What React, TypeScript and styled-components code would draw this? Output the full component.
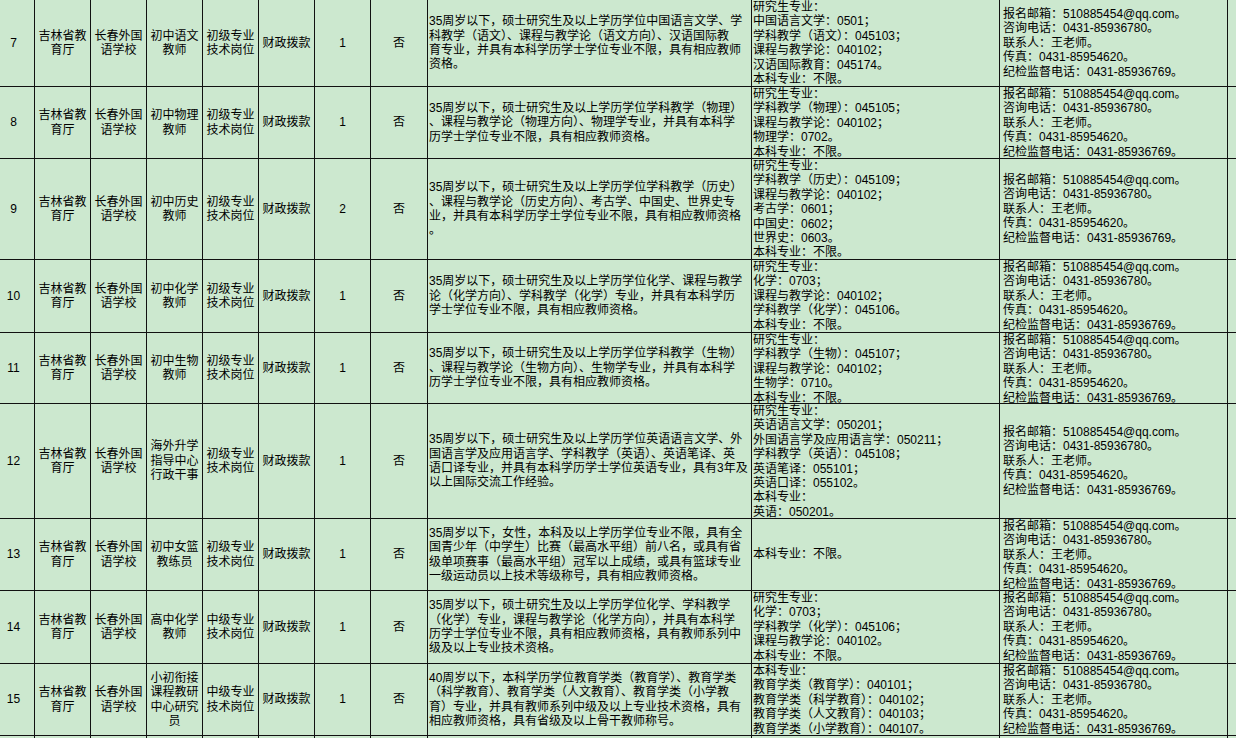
import React from 'react';
import styled, { createGlobalStyle } from 'styled-components';

const Global = createGlobalStyle`
  html, body { margin: 0; padding: 0; background: #cce8cf; overflow: hidden; }
  body {
    font-family: "Liberation Sans", "Noto Sans CJK SC", sans-serif;
    font-size: 12px;
    color: #000;
  }
`;

const COLS = '35px 56px 56px 56px 56px 56px 56px 57px 324px 248px 228px 1fr';

const Sheet = styled.div`
  display: flex;
  flex-direction: column;
  width: 1236px;
  height: 738px;
  overflow: hidden;
  background: #cce8cf;
`;

const Row = styled.div<{ $h: number }>`
  display: grid;
  grid-template-columns: ${COLS};
  flex: 0 0 auto;
  height: ${(p) => p.$h}px;
  box-sizing: border-box;
  border-bottom: 1px solid #111;
`;

const Cell = styled.div<{ $last?: boolean }>`
  box-sizing: border-box;
  min-width: 0;
  overflow: hidden;
  display: flex;
  flex-direction: column;
  border-right: ${(p) => (p.$last ? 'none' : '1px solid #111')};
`;

const NumCell = styled(Cell)`
  text-align: center;
  padding-right: 7px;
`;

const MidCell = styled(Cell)`
  text-align: center;
`;

const TextCell = styled(Cell)`
  text-align: left;
  padding-left: 1px;
`;

const ContactCell = styled(Cell)`
  text-align: left;
  padding-left: 3px;
`;

const Lines = styled.div`
  margin: auto 0;
  line-height: 14.4px;
  white-space: nowrap;
`;

const Line = styled.div`
  height: 14.4px;
`;

type RowData = {
  no: string;
  h: number;
  job: string[];
  level: string[];
  count: string;
  desc: string[];
  major: string[];
};

const CONTACT = [
  '报名邮箱：510885454@qq.com。',
  '咨询电话：0431-85936780。',
  '联系人：王老师。',
  '传真：0431-85954620。',
  '纪检监督电话：0431-85936769。',
];

const JUNIOR = ['初级专业', '技术岗位'];
const MIDDLE = ['中级专业', '技术岗位'];

const ROWS: RowData[] = [
  {
    no: '7', h: 87, job: ['初中语文', '教师'], level: JUNIOR, count: '1',
    desc: [
      '35周岁以下，硕士研究生及以上学历学位中国语言文学、学',
      '科教学（语文）、课程与教学论（语文方向）、汉语国际教',
      '育专业，并具有本科学历学士学位专业不限，具有相应教师',
      '资格。',
    ],
    major: [
      '研究生专业：',
      '中国语言文学：0501；',
      '学科教学（语文）：045103；',
      '课程与教学论：040102；',
      '汉语国际教育：045174。',
      '本科专业：不限。',
    ],
  },
  {
    no: '8', h: 72, job: ['初中物理', '教师'], level: JUNIOR, count: '1',
    desc: [
      '35周岁以下，硕士研究生及以上学历学位学科教学（物理）',
      '、课程与教学论（物理方向）、物理学专业，并具有本科学',
      '历学士学位专业不限，具有相应教师资格。',
    ],
    major: [
      '研究生专业：',
      '学科教学（物理）：045105；',
      '课程与教学论：040102；',
      '物理学：0702。',
      '本科专业：不限。',
    ],
  },
  {
    no: '9', h: 101, job: ['初中历史', '教师'], level: JUNIOR, count: '2',
    desc: [
      '35周岁以下，硕士研究生及以上学历学位学科教学（历史）',
      '、课程与教学论（历史方向）、考古学、中国史、世界史专',
      '业，并具有本科学历学士学位专业不限，具有相应教师资格',
      '。',
    ],
    major: [
      '研究生专业：',
      '学科教学（历史）：045109；',
      '课程与教学论：040102；',
      '考古学：0601；',
      '中国史：0602；',
      '世界史：0603。',
      '本科专业：不限。',
    ],
  },
  {
    no: '10', h: 73, job: ['初中化学', '教师'], level: JUNIOR, count: '1',
    desc: [
      '35周岁以下，硕士研究生及以上学历学位化学、课程与教学',
      '论（化学方向）、学科教学（化学）专业，并具有本科学历',
      '学士学位专业不限，具有相应教师资格。',
    ],
    major: [
      '研究生专业：',
      '化学：0703；',
      '课程与教学论：040102；',
      '学科教学（化学）：045106。',
      '本科专业：不限。',
    ],
  },
  {
    no: '11', h: 71, job: ['初中生物', '教师'], level: JUNIOR, count: '1',
    desc: [
      '35周岁以下，硕士研究生及以上学历学位学科教学（生物）',
      '、课程与教学论（生物方向）、生物学专业，并具有本科学',
      '历学士学位专业不限，具有相应教师资格。',
    ],
    major: [
      '研究生专业：',
      '学科教学（生物）：045107；',
      '课程与教学论：040102；',
      '生物学：0710。',
      '本科专业：不限。',
    ],
  },
  {
    no: '12', h: 115, job: ['海外升学', '指导中心', '行政干事'], level: JUNIOR, count: '1',
    desc: [
      '35周岁以下，硕士研究生及以上学历学位英语语言文学、外',
      '国语言学及应用语言学、学科教学（英语）、英语笔译、英',
      '语口译专业，并具有本科学历学士学位英语专业，具有3年及',
      '以上国际交流工作经验。',
    ],
    major: [
      '研究生专业：',
      '英语语言文学：050201；',
      '外国语言学及应用语言学：050211；',
      '学科教学（英语）：045108；',
      '英语笔译：055101；',
      '英语口译：055102。',
      '本科专业：',
      '英语：050201。',
    ],
  },
  {
    no: '13', h: 72, job: ['初中女篮', '教练员'], level: JUNIOR, count: '1',
    desc: [
      '35周岁以下，女性，本科及以上学历学位专业不限，具有全',
      '国青少年（中学生）比赛（最高水平组）前八名，或具有省',
      '级单项赛事（最高水平组）冠军以上成绩，或具有篮球专业',
      '一级运动员以上技术等级称号，具有相应教师资格。',
    ],
    major: ['本科专业：不限。'],
  },
  {
    no: '14', h: 73, job: ['高中化学', '教师'], level: MIDDLE, count: '1',
    desc: [
      '35周岁以下，硕士研究生及以上学历学位化学、学科教学',
      '（化学）专业，课程与教学论（化学方向），并具有本科学',
      '历学士学位专业不限，具有相应教师资格，具有教师系列中',
      '级及以上专业技术资格。',
    ],
    major: [
      '研究生专业：',
      '化学：0703；',
      '学科教学（化学）：045106；',
      '课程与教学论：040102。',
      '本科专业：不限。',
    ],
  },
  {
    no: '15', h: 72, job: ['小初衔接', '课程教研', '中心研究', '员'], level: MIDDLE, count: '1',
    desc: [
      '40周岁以下，本科学历学位教育学类（教育学）、教育学类',
      '（科学教育）、教育学类（人文教育）、教育学类（小学教',
      '育）专业，并具有教师系列中级及以上专业技术资格，具有',
      '相应教师资格，具有省级及以上骨干教师称号。',
    ],
    major: [
      '本科专业：',
      '教育学类（教育学）：040101；',
      '教育学类（科学教育）：040102；',
      '教育学类（人文教育）：040103；',
      '教育学类（小学教育）：040107。',
    ],
  },
];

const Text: React.FC<{ lines: string[] }> = ({ lines }) => (
  <Lines>
    {lines.map((l, i) => (
      <Line key={i}>{l}</Line>
    ))}
  </Lines>
);

const DataRow: React.FC<{ r: RowData }> = ({ r }) => (
  <Row $h={r.h}>
    <NumCell><Text lines={[r.no]} /></NumCell>
    <MidCell><Text lines={['吉林省教', '育厅']} /></MidCell>
    <MidCell><Text lines={['长春外国', '语学校']} /></MidCell>
    <MidCell><Text lines={r.job} /></MidCell>
    <MidCell><Text lines={r.level} /></MidCell>
    <MidCell><Text lines={['财政拨款']} /></MidCell>
    <MidCell><Text lines={[r.count]} /></MidCell>
    <MidCell><Text lines={['否']} /></MidCell>
    <TextCell><Text lines={r.desc} /></TextCell>
    <TextCell><Text lines={r.major} /></TextCell>
    <ContactCell><Text lines={CONTACT} /></ContactCell>
    <Cell $last />
  </Row>
);

const EmptyRow: React.FC = () => (
  <Row $h={40}>
    {Array.from({ length: 11 }).map((_, i) => (
      <Cell key={i} />
    ))}
    <Cell $last />
  </Row>
);

export default function App() {
  return (
    <>
      <Global />
      <Sheet>
        {ROWS.map((r) => (
          <DataRow key={r.no} r={r} />
        ))}
        <EmptyRow />
      </Sheet>
    </>
  );
}
